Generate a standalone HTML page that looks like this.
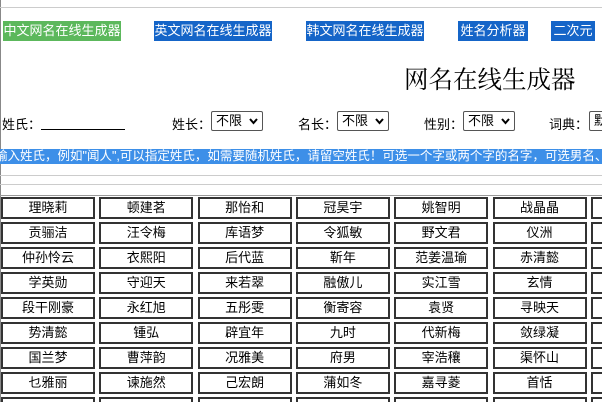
<!DOCTYPE html>
<html style="overflow:hidden;height:402px"><head><meta charset="utf-8"><style>
body{margin:0;width:602px;height:402px;overflow:hidden;background:#fff;font-family:"Liberation Sans","Noto Sans CJK SC",sans-serif;position:relative}
.a{position:absolute}
.btn{position:absolute;top:21px;height:20px;line-height:20px;color:#fff;font-size:13px;text-align:center;background:#1565c8;white-space:nowrap;overflow:hidden}
.hl{position:absolute;left:0;width:602px;height:1px;background:#ccc}
.lb{position:absolute;top:114px;font-size:13px;color:#000}
.sel{position:absolute;top:111px;height:18px;width:46px;border:1px solid #555;border-radius:2px;font-size:13px;line-height:18px;padding-left:4px;background:#fff}
.sel svg{position:absolute;right:4px;top:6px}
.c{position:absolute;width:90px;height:18px;border:2px solid #333;font-size:13px;line-height:18px;text-align:center;color:#000}
#g{position:absolute;left:0;top:0;width:602px;height:402px;overflow:hidden}
</style></head><body>
<div class="a" style="left:0;top:0;width:1px;height:402px;background:#888"></div>
<div class="hl" style="top:7px"></div>
<div class="btn" style="left:3px;width:118px;background:#5cb85c">中文网名在线生成器</div>
<div class="btn" style="left:154px;width:118px">英文网名在线生成器</div>
<div class="btn" style="left:306px;width:118px">韩文网名在线生成器</div>
<div class="btn" style="left:458px;width:70px">姓名分析器</div>
<div class="btn" style="left:551px;width:44px">二次元</div>
<div class="a" style="left:404px;top:61px;font-size:24.5px;font-family:'Liberation Serif','Noto Serif CJK SC',serif;color:#000">网名在线生成器</div>
<div class="lb" style="left:2px">姓氏：</div>
<div class="a" style="left:41px;top:129px;width:84px;height:1px;background:#000"></div>
<div class="lb" style="left:172px">姓长：</div>
<div class="sel" style="left:211px">不限<svg width="9" height="7"><path d="M1 1L4.5 5L8 1" stroke="#000" stroke-width="2" fill="none"/></svg></div>
<div class="lb" style="left:298px">名长：</div>
<div class="sel" style="left:337px">不限<svg width="9" height="7"><path d="M1 1L4.5 5L8 1" stroke="#000" stroke-width="2" fill="none"/></svg></div>
<div class="lb" style="left:424px">性别：</div>
<div class="sel" style="left:463px">不限<svg width="9" height="7"><path d="M1 1L4.5 5L8 1" stroke="#000" stroke-width="2" fill="none"/></svg></div>
<div class="lb" style="left:549px">词典：</div>
<div class="sel" style="left:589px">默认</div>
<div class="a" style="left:0;top:149px;width:602px;height:15px;background:#3d8fe8;color:#fff;font-size:12.5px;line-height:15px;white-space:nowrap;overflow:hidden;text-indent:-5px">输入姓氏，例如"闻人",可以指定姓氏，如需要随机姓氏，请留空姓氏！可选一个字或两个字的名字，可选男名、女名</div>
<div class="hl" style="top:175px"></div>
<div class="hl" style="top:184px"></div>
<div class="hl" style="top:195px;background:#999"></div>
<div id="g"></div>
<script>
var n=["理晓莉","顿建茗","那怡和","冠昊宇","姚智明","战晶晶","贡骊洁","汪令梅","库语梦","令狐敏","野文君","仪洲","仲孙怜云","衣熙阳","后代蓝","靳年","范姜温瑜","赤清懿","学英勋","守迎天","来若翠","融傲儿","实江雪","玄情","段干刚豪","永红旭","五彤雯","衡寄容","袁贤","寻映天","势清懿","锺弘","辟宜年","九时","代新梅","敛绿凝","国兰梦","曹萍韵","况雅美","府男","宰浩穰","渠怀山","乜雅丽","谏施然","己宏朗","蒲如冬","嘉寻菱","首恬"];
var h="";
for(var r=0;r<9;r++)for(var c=0;c<7;c++){var t=(r<8&&c<6)?n[r*6+c]:"";h+='<div class="c" style="left:'+(1+c*98.3)+'px;top:'+(197+r*25)+'px">'+t+'</div>';}
document.getElementById("g").innerHTML=h;
</script>
</body></html>
